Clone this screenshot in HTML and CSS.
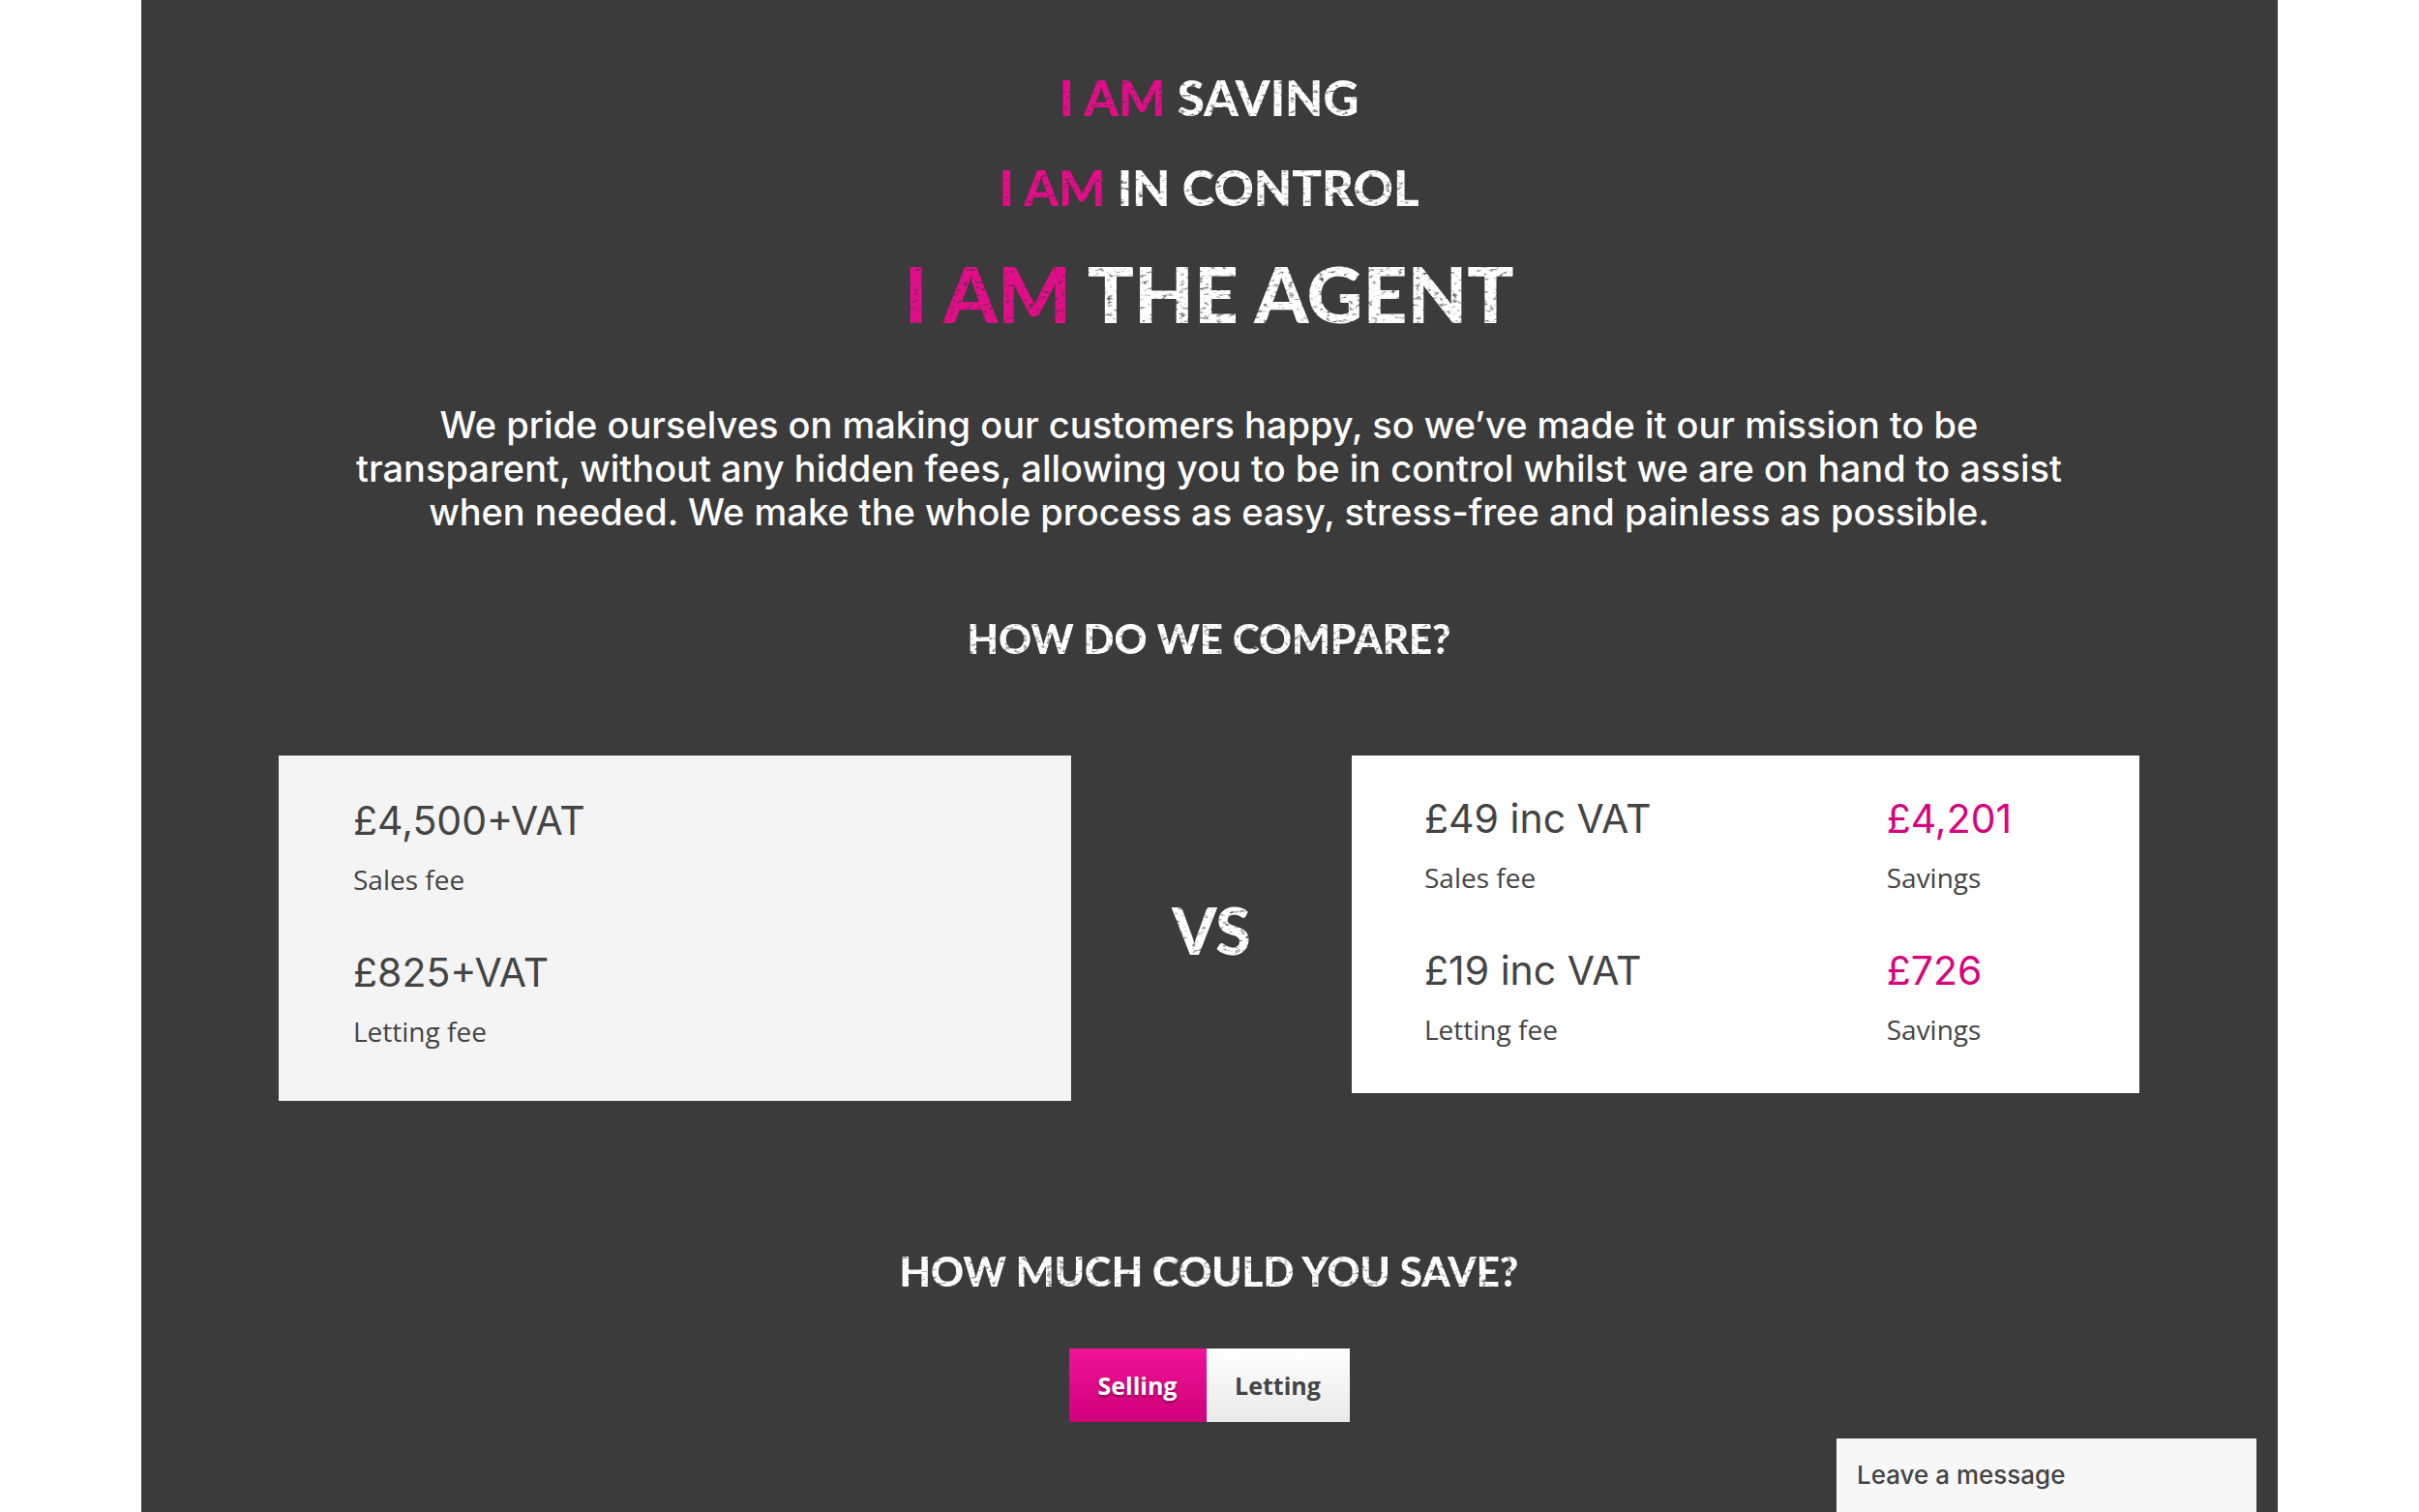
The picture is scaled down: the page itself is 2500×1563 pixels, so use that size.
FILE: index.html
```html
<!DOCTYPE html>
<html lang="en">
<head>
<meta charset="utf-8">
<title>I Am The Agent</title>
<meta name="viewport" content="width=device-width, initial-scale=1">
<link rel="stylesheet" href="styles.css">
</head>
<body>
<svg class="filters" aria-hidden="true">
  <filter id="worn" x="0" y="0" width="100%" height="100%">
    <feTurbulence type="fractalNoise" baseFrequency="0.16 0.3" numOctaves="3" seed="4" result="noise"/>
    <feColorMatrix in="noise" type="matrix" values="0 0 0 0 0  0 0 0 0 0  0 0 0 0 0  3 0 0 0 -0.3" result="mask"/>
    <feComposite in="SourceGraphic" in2="mask" operator="in"/>
  </filter>
</svg>
<main class="page">
  <h1 class="slogan">
    <span class="slogan-line"><em>I AM</em> SAVING</span>
    <span class="slogan-line"><em>I AM</em> IN CONTROL</span>
    <span class="slogan-line slogan-main"><em>I AM</em> THE AGENT</span>
  </h1>
  <p class="intro">We pride ourselves on making our customers happy, so we’ve made it our mission to be transparent, without any hidden fees, allowing you to be in control whilst we are on hand to assist when needed. We make the whole process as easy, stress-free and painless as possible.</p>

  <h2 class="heading">HOW DO WE COMPARE?</h2>
  <section class="compare">
    <div class="card card-them">
      <div class="fee"><strong class="price">£4,500+VAT</strong><span class="label">Sales fee</span></div>
      <div class="fee"><strong class="price">£825+VAT</strong><span class="label">Letting fee</span></div>
    </div>
    <div class="versus">VS</div>
    <div class="card card-us">
      <div class="fee"><strong class="price">£49 inc VAT</strong><span class="label">Sales fee</span></div>
      <div class="fee"><strong class="price saving">£4,201</strong><span class="label">Savings</span></div>
      <div class="fee"><strong class="price">£19 inc VAT</strong><span class="label">Letting fee</span></div>
      <div class="fee"><strong class="price saving">£726</strong><span class="label">Savings</span></div>
    </div>
  </section>

  <h2 class="heading heading-save">HOW MUCH COULD YOU SAVE?</h2>
  <div class="toggle">
    <button type="button" class="option option-active" aria-pressed="true">Selling</button>
    <button type="button" class="option" aria-pressed="false">Letting</button>
  </div>
</main>
<button type="button" class="chat">Leave a message</button>
</body>
</html>
```
FILE: styles.css
```css
* {
  box-sizing: border-box;
}

body {
  margin: 0;
  padding: 0 146px;
  background: #fff;
  color: #444;
  font-family: "Open Sans", sans-serif;
}

.filters {
  position: absolute;
  width: 0;
  height: 0;
}

.page {
  min-height: 100vh;
  padding: 54px 143px 92px 142px;
  background: #3b3b3b;
}

.slogan,
.heading,
.versus {
  margin: 0;
  color: #fff;
  font-family: Lato, sans-serif;
  font-weight: 900;
  text-align: center;
  filter: url(#worn);
}

.slogan-line {
  display: block;
  font-size: 51px;
  line-height: 93px;
}

.slogan-line em {
  color: #e20a89;
  font-style: normal;
}

.slogan-main {
  margin-top: 13px;
  font-size: 80px;
  line-height: 100px;
}

.intro {
  max-width: 1800px;
  margin: 64px auto 0;
  color: #fff;
  font-family: Inter, sans-serif;
  font-size: 38px;
  font-weight: 500;
  line-height: 45px;
  text-align: center;
}

.heading {
  margin-top: 80px;
  font-size: 42px;
  line-height: 56px;
}

.compare {
  display: grid;
  grid-template-columns: 819fr 290fr 814fr;
  align-items: start;
  margin-top: 93px;
}

.card {
  display: grid;
  row-gap: 51px;
}

.card-them {
  padding: 42px 77px 52px;
  background: #f4f4f4;
}

.card-us {
  grid-template-columns: 477fr 186fr;
  padding: 40px 75px 46px;
  background: #fff;
}

.fee {
  display: flex;
  flex-direction: column;
  gap: 16px;
}

.price {
  font-family: Inter, sans-serif;
  font-size: 41px;
  font-weight: 400;
  line-height: 50px;
}

.saving {
  color: #d6057d;
}

.label {
  font-size: 28px;
  line-height: 40px;
}

.versus {
  align-self: center;
  padding-top: 4px;
  font-size: 66px;
  line-height: 80px;
}

.heading-save {
  margin-top: 148px;
}

.toggle {
  display: flex;
  justify-content: center;
  margin-top: 52px;
}

.option {
  width: 148px;
  height: 76px;
  padding: 0;
  border: 0;
  background: linear-gradient(#fff, #e9e9e9);
  color: #444;
  font: 700 25px/36px "Open Sans", sans-serif;
}

.option-active {
  width: 142px;
  background: linear-gradient(#ef1494, #d0007b);
  color: #fff;
  text-shadow: 0 2px 3px rgba(0, 0, 0, 0.4);
}

.chat {
  position: fixed;
  right: 168px;
  bottom: 0;
  width: 434px;
  height: 76px;
  padding: 0 21px;
  border: 0;
  background: #f7f7f7;
  color: #444;
  font: 500 26px/36px Inter, sans-serif;
  text-align: left;
}
```
